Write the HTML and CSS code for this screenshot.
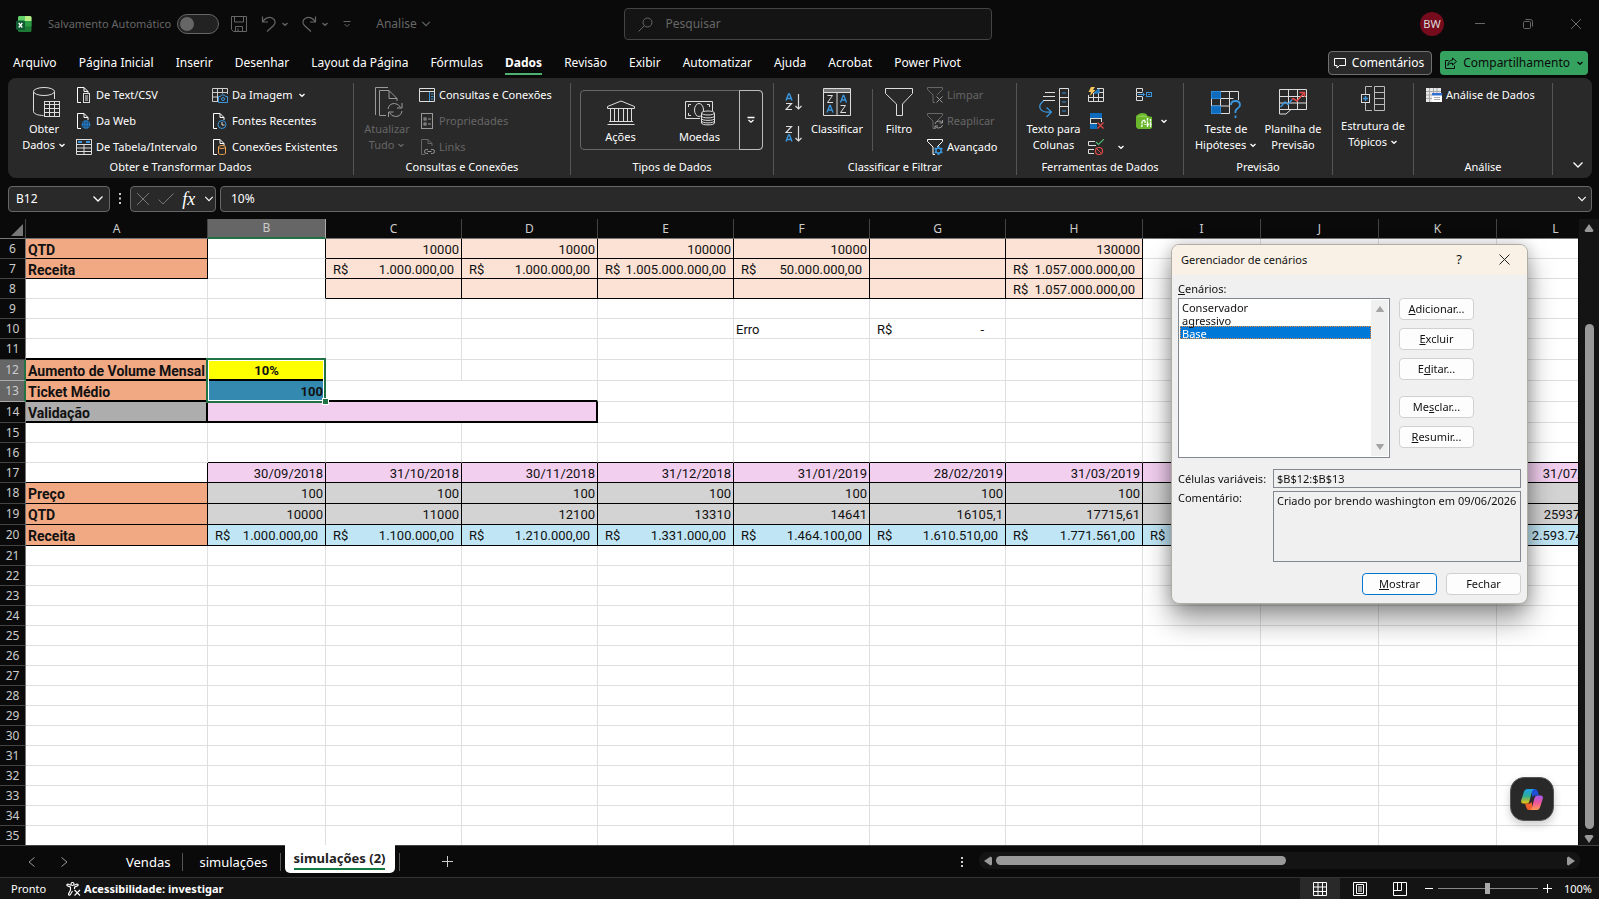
FILE: index.html
```html
<!DOCTYPE html>
<html lang="pt-BR">
<head>
<meta charset="utf-8">
<title>Analise - Excel</title>
<link rel="stylesheet" href="styles.css">
</head>
<body>
<svg class="defs" aria-hidden="true">
  <symbol id="chev" viewBox="0 0 8 8"><path d="M1.5 3 4 5.3 6.500 3" fill="none" stroke="currentColor" stroke-width="1.3"/></symbol>
  <symbol id="chev-l" viewBox="0 0 12 8"><path d="M1.500 1.500 6 6 10.500 1.500" fill="none" stroke="currentColor" stroke-width="1.300"/></symbol>
  <symbol id="doc" viewBox="0 0 16 16"><path d="M5 15.500H1.500V.5H8l4 4V7M8 .5v4h4" fill="none" stroke="currentColor"/></symbol>
  <symbol id="funnel" viewBox="0 0 16 16"><path d="M.5.5h15v2L10 8M.5.5v2L6 8v7.500h2" fill="none" stroke="currentColor"/></symbol>
</svg>
<div class="app">
  <header class="titlebar">
    <svg class="logo" viewBox="0 0 16 16"><rect x="2" width="13.500" height="16" rx="1.500" fill="#1c7a35"/><path d="M3.500 0H9v5H2V1.500Q2 0 3.500 0z" fill="#5fd068"/><path d="M9 0h5q1.500 0 1.500 1.500V5H9z" fill="#b8ee86"/><rect x="9" y="5" width="6.500" height="5.500" fill="#2b9c44"/><rect y="4.500" width="9" height="9.500" rx="1.500" fill="#0e5c31"/><path d="M2.700 7l3.600 4.500M6.300 7l-3.600 4.500" stroke="#fff" stroke-width="1.300"/></svg>
    <label class="autosave">Salvamento Automático <input type="checkbox" class="switch"></label>
    <button class="bare" aria-label="Salvar"><svg width="16" height="16" viewBox="0 0 16 16" fill="none" stroke="currentColor"><path d="M.5.5h15v15H2.500l-2-2zM3.500.5v5.500h9V.5M4.500 15.500v-5h7v5M7 15v-2.500"/></svg></button>
    <button class="bare undo" aria-label="Desfazer"><svg width="16" height="16" viewBox="0 0 16 16" fill="none" stroke="currentColor" stroke-width="1.200"><path d="M1.500.5v5.500H7M1.700 5.700C4 2 8 .2 11.500 2.300s3.200 5.200.8 7.400L6 15.500"/></svg><svg class="chev"><use href="#chev"/></svg></button>
    <button class="bare redo" aria-label="Refazer"><svg width="16" height="16" viewBox="0 0 16 16" fill="none" stroke="currentColor" stroke-width="1.200"><path d="M14.500.5v5.500H9M14.300 5.700C12 2 8 .2 4.500 2.300S1.300 7.500 3.700 9.700L10 15.500"/></svg><svg class="chev"><use href="#chev"/></svg></button>
    <button class="bare more" aria-label="Personalizar"><svg width="8" height="8" viewBox="0 0 8 8" fill="none" stroke="currentColor"><path d="M.5 1.500h7M1.500 4 4 6.500 6.500 4"/></svg></button>
    <button class="bare docname">Analise <svg width="10" height="8"><use href="#chev-l"/></svg></button>
    <label class="search"><svg width="15" height="15" viewBox="0 0 15 15" fill="none" stroke="currentColor"><circle cx="9.500" cy="5.500" r="4.500"/><path d="M6.300 8.700.5 14.500"/></svg><input type="text" placeholder="Pesquisar" aria-label="Pesquisar"></label>
    <div class="window-controls">
      <span class="avatar">BW</span>
      <button class="bare" aria-label="Minimizar"><svg width="10" height="10" viewBox="0 0 10 10" stroke="currentColor"><path d="M0 4.500h10"/></svg></button>
      <button class="bare" aria-label="Restaurar"><svg width="10" height="10" viewBox="0 0 10 10" fill="none" stroke="currentColor"><rect x=".5" y="2.500" width="7" height="7" rx="1"/><path d="M2.500.5h5q2 0 2 2v5"/></svg></button>
      <button class="bare" aria-label="Fechar janela"><svg width="10" height="10" viewBox="0 0 10 10" stroke="currentColor"><path d="M0 0l10 10M10 0 0 10"/></svg></button>
    </div>
  </header>

  <nav class="tabs">
    <a href="#">Arquivo</a><a href="#">Página Inicial</a><a href="#">Inserir</a><a href="#">Desenhar</a><a href="#">Layout da Página</a><a href="#">Fórmulas</a><a href="#" class="active">Dados</a><a href="#">Revisão</a><a href="#">Exibir</a><a href="#">Automatizar</a><a href="#">Ajuda</a><a href="#">Acrobat</a><a href="#">Power Pivot</a>
    <div class="tab-actions">
      <button class="comments"><svg width="12" height="12" viewBox="0 0 12 12" fill="none" stroke="currentColor"><path d="M.5 1.500h11v7H5.500L3 11V8.500H.5z"/></svg>Comentários</button>
      <button class="share"><svg width="12" height="12" viewBox="0 0 12 12" fill="none" stroke="currentColor"><path d="M3.500 3.500h-3v8h9V8.500M7.500 1l4 3.500-4 3.500V6Q4 6 2.800 8.500 3.300 3.500 7.500 3z"/></svg>Compartilhamento<svg class="chev"><use href="#chev"/></svg></button>
    </div>
  </nav>

  <section class="ribbon">
    <div class="group">
      <div class="tools">
        <button class="big obter"><svg width="28" height="31" viewBox="0 0 28 31" fill="none" stroke="#ddd"><ellipse cx="11" cy="4.500" rx="10.500" ry="4"/><path d="M.5 4.500v20c0 2 4 4 10 4M21.500 4.500V12"/><rect x="11.500" y="14.500" width="15" height="15" fill="#292929"/><path d="M11.500 17.500h15M11.500 21.500h15M11.500 25.500h15M16.500 15v15M21.500 15v15"/></svg><span>Obter<br>Dados <svg class="chev"><use href="#chev"/></svg></span></button>
        <div class="list">
          <button><svg viewBox="0 0 16 16" fill="none" stroke="#ddd"><use href="#doc"/><rect x="7.500" y="6.500" width="6" height="9"/><path d="M9 9h3M9 11h3M9 13h3"/></svg>De Text/CSV</button>
          <button><svg viewBox="0 0 16 16" fill="none" stroke="#ddd"><use href="#doc"/><circle cx="10" cy="11.500" r="4.300" fill="#2b88d8" stroke="none"/><path d="M6 10h8M6 13h8M10 7.500v8M8 8q-1 3.500 0 7M12 8q1 3.500 0 7" stroke="#1b3f60" stroke-width=".7"/></svg>Da Web</button>
          <button><svg viewBox="0 0 16 16" fill="none" stroke="#ddd"><path d="M.5 1v14.500h15V1M.5 5.500h15M.5 9h15M.5 12.500h15M8 5.500v10M0 .5h16"/><path d="M2 3h4M10 3h4" stroke="#3a96dd" stroke-width="2"/></svg>De Tabela/Intervalo</button>
        </div>
        <div class="list second">
          <button><svg viewBox="0 0 16 16" fill="none" stroke="#ccc"><path d="M6 14.500H.5V1.500h15V7M.5 5.500h15M.5 10H6M5.500 1.500V14M10.500 1.500v5"/><path d="M6.500 9.500h2l1-1.500h3l1 1.500h2v6h-9z" stroke="#3a96dd" fill="#292929"/><circle cx="11" cy="12" r="1.500" stroke="#3a96dd"/></svg>Da Imagem <svg class="chev"><use href="#chev"/></svg></button>
          <button><svg viewBox="0 0 16 16" fill="none" stroke="#ddd"><use href="#doc"/><circle cx="10" cy="11.500" r="4" stroke="#3a96dd" fill="#292929"/><path d="M10 9v3h2.500"/></svg>Fontes Recentes</button>
          <button><svg viewBox="0 0 16 16" fill="none" stroke="#ddd"><use href="#doc"/><path d="M6.500 8v6.500c0 1.300 7 1.300 7 0V8" stroke="#eea04c"/><ellipse cx="10" cy="8" rx="3.500" ry="1.500" stroke="#eea04c"/></svg>Conexões Existentes</button>
        </div>
      </div>
      <div class="caption">Obter e Transformar Dados</div>
    </div>

    <div class="group">
      <div class="tools">
        <button class="big atualizar" disabled><svg width="28" height="31" viewBox="0 0 28 31" fill="none" stroke="#999"><path d="M.5 28V.5H13M11 28.500H4.500v-25H14l8 8V14M14 3.500v8h8M13 22q1-5.500 6.500-5.500 4 0 6 4M27 16v5h-5M27 24q-1 5.500-6.500 5.500-4 0-6-4M13.500 30v-5h5"/></svg><span>Atualizar<br>Tudo <svg class="chev"><use href="#chev"/></svg></span></button>
        <div class="list">
          <button><svg viewBox="0 0 16 16" fill="none" stroke="#ddd"><path d="M.5 1.500h15v13H.5zM.5 4.500h15"/><path d="M10.500 5v9M12 7h2.500M12 9.500h2.500M12 12h2.500" stroke="#3a96dd"/></svg>Consultas e Conexões</button>
          <button disabled><svg viewBox="0 0 16 16" fill="none" stroke="#999"><rect x="2.500" y=".5" width="11" height="15"/><rect x="5" y="5" width="2" height="2"/><rect x="5" y="10" width="2" height="2"/><path d="M9 6h3M9 11h3"/></svg>Propriedades</button>
          <button disabled><svg viewBox="0 0 16 16" fill="none" stroke="#999"><g transform="translate(1)"><use href="#doc"/><path d="M8 10.500H6.500a2 2 0 0 0 0 4H8M11 10.500h1.500a2 2 0 0 1 0 4H11M7.500 12.500h4"/></g></svg>Links</button>
        </div>
      </div>
      <div class="caption">Consultas e Conexões</div>
    </div>

    <div class="group">
      <div class="tools">
        <div class="gallery">
          <button><svg width="28" height="26" viewBox="0 0 28 26" fill="none" stroke="#ddd"><path d="M.5 8.500v-2L14 1l13.500 5.500v2zM3.500 8.500v13M7.500 8.500v13M11.500 8.500v13M16.500 8.500v13M20.500 8.500v13M24.500 8.500v13M2 21.500h24M.5 24.500h27"/></svg>Ações</button>
          <button><svg width="30" height="26" viewBox="0 0 30 26" fill="none" stroke="#ddd"><path d="M15 18.500H.5V1.500h27V11M3.500 7V4.500H6M3.500 13v2.500H6M22 4.500h2.500V7"/><ellipse cx="14" cy="10" rx="4.500" ry="6.500"/><path d="M16.500 13v10c0 2.500 13 2.500 13 0V13" fill="#292929"/><ellipse cx="23" cy="13" rx="6.500" ry="2" fill="#292929"/><path d="M16.500 16c0 2.500 13 2.500 13 0M16.500 18.500c0 2.500 13 2.500 13 0M16.500 21c0 2.500 13 2.500 13 0"/></svg>Moedas</button>
          <button class="gallery-more" aria-label="Mais"><svg width="8" height="8" viewBox="0 0 8 8" fill="none" stroke="currentColor" stroke-width="1.300"><path d="M.5 1.500h7M1.500 4 4 6.200 6.500 4"/></svg></button>
        </div>
      </div>
      <div class="caption">Tipos de Dados</div>
    </div>

    <div class="group">
      <div class="tools">
        <div class="sorts">
          <button class="bare" aria-label="Classificar de A a Z"><svg width="18" height="18" viewBox="0 0 18 18" fill="none" stroke="#ddd" stroke-width="1.200"><path d="M1 7.500 3.500 1h1L7 7.500M2 5.500h4" stroke="#3a96dd" stroke-width="1.400"/><path d="M1 10.500h5.500L1 16.500H7M13.500 1v15M10.500 13l3 3 3-3"/></svg></button>
          <button class="bare" aria-label="Classificar de Z a A"><svg width="18" height="18" viewBox="0 0 18 18" fill="none" stroke="#ddd" stroke-width="1.200"><path d="M1 16.500 3.500 10h1L7 16.500M2 14.500h4" stroke="#3a96dd" stroke-width="1.400"/><path d="M1 1.500h5.500L1 7.500H7M13.500 1v15M10.500 13l3 3 3-3"/></svg></button>
        </div>
        <button class="big classificar"><svg width="28" height="31" viewBox="0 0 28 31" fill="none" stroke="#ddd"><path d="M.5 1.500h27v27H.5zM.5 5.500h27M14 5.500v23"/><path d="M1 3.500h26" stroke="#777" stroke-width="3"/><path d="M4.500 8.500H9.500L4.500 15.500H10M17.500 18.500h5L17.500 25.500H23"/><path d="M4 25.500l2.700-7h.6l2.700 7M5 23h4M17.500 15.500l2.700-7h.6l2.700 7M18.500 13h4" stroke="#3a96dd" stroke-width="1.300"/></svg><span>Classificar</span></button>
        <i class="rule"></i>
        <button class="big filtro"><svg width="28" height="31" viewBox="0 0 28 31" fill="none" stroke="#ddd"><path d="M.5 1.500h27v5L17.500 17v11.500h-6V17L.5 6.500z"/></svg><span>Filtro</span></button>
        <div class="list filters">
          <button disabled><svg viewBox="0 0 16 16" fill="none" stroke="#999"><use href="#funnel"/><path d="M9.500 9.500l6 6M15.500 9.500l-6 6"/></svg>Limpar</button>
          <button disabled><svg viewBox="0 0 16 16" fill="none" stroke="#999"><use href="#funnel"/><path d="M8 11q.5-3 4-3 2 0 3 1.500M15.500 7v3h-3M15.500 12q-.5 3-4 3-2 0-3-1.500M8 16v-3h3"/></svg>Reaplicar</button>
          <button><svg viewBox="0 0 16 16" fill="none" stroke="#ddd"><use href="#funnel"/><circle cx="11.500" cy="11.500" r="2.600" stroke="#3a96dd" stroke-width="1.500"/><path d="M11.500 7v2M11.500 14v2M7.600 9.200l1.700 1M13.700 12.800l1.700 1M7.600 13.800l1.700-1M13.700 10.200l1.700-1" stroke="#3a96dd" stroke-width="1.800"/></svg>Avançado</button>
        </div>
      </div>
      <div class="caption">Classificar e Filtrar</div>
    </div>

    <div class="group">
      <div class="tools">
        <button class="big texto"><svg width="30" height="31" viewBox="0 0 30 31" fill="none" stroke="#ddd"><path d="M6 5.500h10M4 9.500h12M4 13.500h12M20.500 1.500h9v27h-9zM20.500 10.500h9M20.500 19.500h9"/><path d="M23 6h4M23 15h4M23 24h4" stroke="#3a96dd"/><path d="M4.500 14Q-1 18 1.500 22t10.500 3M7.500 20.500l5 4.500-5 5" stroke="#3a96dd" stroke-width="1.200"/></svg><span>Texto para<br>Colunas</span></button>
        <div class="list icons">
          <button aria-label="Preenchimento Relâmpago"><svg viewBox="0 0 16 16" fill="none" stroke="#ddd"><path d="M.5 8v6.500h15V1.500H9M0 10.500h16M5.500 6v8.500M10.500 2v12.500M6 5.500h9.500"/><path d="M6 6h5V2z" fill="#0f6cbd" stroke="#3a96dd"/><path d="M3 0h4L5 3h2.500L2 9l1-4H.5z" fill="#f7c65a" stroke="none"/></svg></button>
          <button aria-label="Remover Duplicadas"><svg viewBox="0 0 16 16"><path d="M2 0h12v5H2zM2 11h7v5H2z" fill="#0f6cbd"/><path d="M2.500 5v6M13.500 5v4M2 5.500h12M2 10.500h7" fill="none" stroke="#ddd"/><path d="M9.500 9.500l6 6M15.500 9.500l-6 6" stroke="#e04848" stroke-width="1.300"/></svg></button>
          <button aria-label="Validação de Dados"><svg viewBox="0 0 16 16" fill="none" stroke="#ddd"><path d="M7 2.500H.5v4H8M6 10.500H.5v4H6"/><path d="M8 3l2.500 2.500L16 0" stroke="#4cb86c" stroke-width="1.200"/><circle cx="11" cy="12" r="3.500" stroke="#e04848" stroke-width="1.200"/><path d="M8.500 9.500l5 5" stroke="#e04848"/></svg><svg class="chev"><use href="#chev"/></svg></button>
        </div>
        <div class="list icons">
          <button aria-label="Consolidar"><svg viewBox="0 0 16 16" fill="none" stroke="#ddd"><path d="M6.500 4.500V1.500h-6v4h6M.5 6v3M6.500 10v3.500h-6v-4h6"/><rect x="10.500" y="5.500" width="5" height="4" stroke="#3a96dd"/><path d="M2 7.500h6.500M6.500 5.500l2 2-2 2M12 7.500h2" stroke="#3a96dd"/></svg></button>
          <button aria-label="Modelo de Dados"><svg viewBox="0 0 16 16"><path d="M0 3.500Q1 1 6 0q5 0 5.500 3L16 4v11l-2 1H2l-2-2z" fill="#6bb72c"/><path d="M1 3.800h10V3Q6 1.500 1 3.800z" fill="#9ad45c"/><path d="M5 13.500l1-.500V8l3-1v5M11.500 5v9M14.500 6v8M10.500 11.500h5" stroke="#fff" stroke-width="1.300" stroke-dasharray="2.500 .8" fill="none"/></svg><svg class="chev"><use href="#chev"/></svg></button>
          <span></span>
        </div>
      </div>
      <div class="caption">Ferramentas de Dados</div>
    </div>

    <div class="group">
      <div class="tools">
        <button class="big teste"><svg width="30" height="31" viewBox="0 0 30 31" fill="none" stroke="#ddd"><path d="M.5 4.500h27V13M.5 26.500h18M.5 11.500h22M.5 19h18M9.500 4.500v22M18.500 4.500v22M.5 4.500v22"/><path d="M.5 4.500h9v7h-9zM.5 19h9v7.500h-9z" fill="#0f6cbd" stroke="#2b88d8"/><path d="M20 18q0-4 4.500-4t4.500 4q0 2-2.500 3.500T24.500 26M24.500 28.500v2.500" stroke="#3a96dd" stroke-width="1.800"/></svg><span>Teste de<br>Hipóteses <svg class="chev"><use href="#chev"/></svg></span></button>
        <button class="big planilha"><svg width="28" height="31" viewBox="0 0 28 31" fill="none" stroke="#ddd"><path d="M.5 2.500h27v20H12l-5 4.500H.5zM.5 9.500h27M.5 16h27M9.500 2.500v20M18.500 2.500v20M1 22.500h11"/><path d="M1.500 20 6 15l3 2.500 4-5" stroke="#3a96dd" stroke-width="1.500"/><path d="M13 12.500l1-1 4 2.500 7-8M20.500 5.500H25.500V10" stroke="#e04848" stroke-width="1.500"/></svg><span>Planilha de<br>Previsão</span></button>
      </div>
      <div class="caption">Previsão</div>
    </div>

    <div class="group">
      <div class="tools">
        <button class="big estrutura"><svg width="24" height="26" viewBox="0 0 24 26" fill="none" stroke="#ddd"><path d="M13.500.5h10v24h-10zM13.500 6.500h10M13.500 12.500h10M13.500 18.500h10M11 .5H4.500v8M4.500 17v7.500H11" stroke="#bbb"/><rect x=".5" y="8.500" width="8" height="8"/><path d="M2 12.500h5M4.500 10v5" stroke="#3a96dd" stroke-width="1.500"/></svg><span>Estrutura de<br>Tópicos <svg class="chev"><use href="#chev"/></svg></span></button>
      </div>
    </div>

    <div class="group">
      <div class="tools">
        <div class="list analise">
          <button><svg viewBox="0 0 16 16"><path d="M0 1h15v14H0z" fill="#e8e8e8"/><path d="M0 4.500h15M0 8h6M0 11.500h6M3.500 1v14M7.500 1v5M11 1v5" stroke="#a8a8a8"/><path d="M6 6h10v9H6z" fill="#fff"/><path d="M6 6h10v2.500H6z" fill="#2f6fd0"/><path d="M8 10.500h6M8 12.500h6" stroke="#aaa"/></svg>Análise de Dados</button>
        </div>
      </div>
      <div class="caption">Análise</div>
    </div>
    <button class="bare collapse" aria-label="Recolher faixa"><svg width="12" height="8"><use href="#chev-l"/></svg></button>
  </section>

  <section class="formula-row">
    <label class="namebox"><input type="text" value="B12" aria-label="Caixa de nome"><svg width="12" height="8"><use href="#chev-l"/></svg></label>
    <svg class="dots" width="4" height="12" viewBox="0 0 4 12" fill="#ccc"><path d="M1 0h2v2H1zM1 4.500h2v2H1zM1 9h2v2H1z"/></svg>
    <div class="fx">
      <button class="bare" aria-label="Cancelar"><svg width="12" height="12" viewBox="0 0 12 12" stroke="#777"><path d="M0 0l12 12M12 0 0 12"/></svg></button>
      <button class="bare" aria-label="Inserir"><svg width="16" height="12" viewBox="0 0 16 12" fill="none" stroke="#777"><path d="M.5 6.500 5 11 15.500.5"/></svg></button>
      <button class="bare fn"><i>fx</i></button>
      <svg width="10" height="8"><use href="#chev-l"/></svg>
    </div>
    <label class="formula"><input type="text" value="10%" aria-label="Barra de fórmulas"><svg width="10" height="8"><use href="#chev-l"/></svg></label>
  </section>

  <main class="workarea">
    <div class="sheet"><table id="grid"></table></div>
    <div class="vscroll">
      <svg width="10" height="8" viewBox="0 0 10 8" fill="#999"><path d="M5 0l4.500 6.500Q9 8 8 8H2Q1 8 .5 6.500z"/></svg>
      <i></i>
      <svg width="10" height="8" viewBox="0 0 10 8" fill="#999"><path d="M5 8 .5 1.500Q1 0 2 0h6q1 0 1.500 1.500z"/></svg>
    </div>
  </main>

  <nav class="sheetbar">
    <div class="arrows">
      <button class="bare" aria-label="Anterior"><svg width="7" height="10" viewBox="0 0 7 10" fill="none" stroke="#999"><path d="M6.500.5 1 5l5.500 4.500"/></svg></button>
      <button class="bare" aria-label="Próxima"><svg width="7" height="10" viewBox="0 0 7 10" fill="none" stroke="#999"><path d="M.5.5 6 5 .5 9.500"/></svg></button>
    </div>
    <a href="#" class="sheettab">Vendas</a>
    <a href="#" class="sheettab">simulações</a>
    <a href="#" class="current"><span>simulações (2)</span></a>
    <i class="tick"></i>
    <button class="bare plus" aria-label="Nova planilha"><svg width="12" height="12" viewBox="0 0 12 12" stroke="#ccc"><path d="M0 5.500h11M5.500 0v11"/></svg></button>
    <svg class="grip" width="2" height="12" viewBox="0 0 2 12" fill="#ccc"><path d="M0 1h2v2H0zM0 5h2v2H0zM0 9h2v2H0z"/></svg>
    <div class="hscroll">
      <svg width="8" height="10" viewBox="0 0 8 10" fill="#999"><path d="M0 5l6.500-4.500Q8 1 8 2v6Q8 9 6.500 9.500z"/></svg>
      <i></i>
      <svg width="8" height="10" viewBox="0 0 8 10" fill="#999"><path d="M8 5 1.500.5Q0 1 0 2v6q0 1 1.500 1.500z"/></svg>
    </div>
  </nav>

  <footer class="status">
    <span>Pronto</span>
    <button class="bare access"><svg width="15" height="14" viewBox="0 0 15 14" fill="none" stroke="#fff" stroke-width="1.100"><circle cx="6.500" cy="2" r="1.500"/><path d="M5 3.200 2 2Q.5 2 1 3.500l3.500 1.700V8L2.500 12q0 1.500 1.500 1L6.500 9M8 3.200 11 2q1.500 0 1 1.500L8.500 5.200V7M8.500 8l5.500 5.500M14 8l-5.500 5.500"/></svg>Acessibilidade: investigar</button>
    <div class="views">
      <button class="bare on" aria-label="Normal"><svg width="14" height="14" viewBox="0 0 14 14" fill="none" stroke="#fff"><path d="M.5.5h13v13H.5zM.5 5h13M.5 9.500h13M5 .5v13M9.500.5v13"/></svg></button>
      <button class="bare" aria-label="Layout da Página"><svg width="14" height="14" viewBox="0 0 14 14" fill="none" stroke="#fff"><path d="M.5.5h13v13H.5zM3.500 2.500h7v9h-7zM5 5h4M5 7h4M5 9h4"/></svg></button>
      <button class="bare" aria-label="Quebra de página"><svg width="14" height="14" viewBox="0 0 14 14" fill="none" stroke="#fff"><path d="M.5.5h13v13H.5zM.5 8.500h8v-8M4.500.5v8"/></svg></button>
    </div>
    <button class="bare" aria-label="Menos zoom"><svg width="8" height="9" viewBox="0 0 8 9" stroke="#fff"><path d="M0 4.500h8"/></svg></button>
    <input type="range" class="zoom" min="0" max="100" value="50" aria-label="Zoom">
    <button class="bare" aria-label="Mais zoom"><svg width="9" height="9" viewBox="0 0 9 9" stroke="#fff"><path d="M0 4.500h9M4.500 0v9"/></svg></button>
    <span class="pct">100%</span>
  </footer>
</div>

<button class="copilot" aria-label="Copilot"><svg width="22" height="21" viewBox="0 0 22 21"><defs><linearGradient id="ca" x1="0" y1="0" x2="0" y2="1"><stop offset="0" stop-color="#1ea0ea"/><stop offset=".5" stop-color="#2fae94"/><stop offset="1" stop-color="#f3c40a"/></linearGradient><linearGradient id="cb" x1="0" y1="0" x2="0" y2="1"><stop offset="0" stop-color="#a35bf0"/><stop offset=".5" stop-color="#f0559a"/><stop offset="1" stop-color="#fb9a50"/></linearGradient></defs><path d="M10 0h4q2 0 2.700 2.500L18 6.500h-4q-2 0-2.500 2z" fill="#1f4fd8"/><path d="M12 21H8q-2 0-2.700-2.500L4 14.500h4q2 0 2.500-2z" fill="#f4602c"/><path d="M6 0h7q-1.500.5-2 2.500L8.500 12Q8 14.500 5.500 14.500H2Q-.5 14.500.3 11L3 2.500Q4 0 6 0z" fill="url(#ca)"/><path d="M16 21H9q1.500-.5 2-2.500L13.500 9q.5-2.500 3-2.500H20q2.500 0 1.700 3.500L19 18.500Q18 21 16 21z" fill="url(#cb)"/></svg></button>

<section class="dialog" role="dialog" aria-labelledby="dlg-title">
  <header><h1 id="dlg-title">Gerenciador de cenários</h1><button class="bare help" aria-label="Ajuda">?</button><button class="bare" aria-label="Fechar"><svg width="11" height="11" viewBox="0 0 11 11" stroke="#222"><path d="M.5.5l10 10M10.500.5l-10 10"/></svg></button></header>
  <div class="dialog-body">
    <label for="scen"><u>C</u>enários:</label>
    <div class="scen-row">
      <div class="listbox">
        <select id="scen" size="12"><option>Conservador</option><option>agressivo</option><option selected>Base</option></select>
        <div class="lscroll"><svg width="8" height="6" viewBox="0 0 8 6" fill="#a3a3a3"><path d="M4 0l4 5.500-.5.5h-7L0 5.500z"/></svg><svg width="8" height="6" viewBox="0 0 8 6" fill="#a3a3a3"><path d="M4 6 0 .5.500 0h7l.5.500z"/></svg></div>
      </div>
      <div class="actions">
        <button><u>A</u>dicionar...</button><button><u>E</u>xcluir</button><button>E<u>d</u>itar...</button>
        <button class="apart">Me<u>s</u>clar...</button><button><u>R</u>esumir...</button>
      </div>
    </div>
    <div class="fields">
      <label for="cells">Células variáveis:</label><input id="cells" type="text" value="$B$12:$B$13" readonly>
      <label for="note">Comentário:</label><textarea id="note" readonly>Criado por brendo washington em 09/06/2026</textarea>
    </div>
    <div class="dlg-foot"><button class="primary"><u>M</u>ostrar</button><button>Fechar</button></div>
  </div>
</section>
<script src="script.js"></script>
</body>
</html>
```
FILE: styles.css
```css
* { box-sizing: border-box; }
body { margin: 0; background: #0a0a0a; color: #fff; font: 12px/16px "Noto Sans", "Open Sans", sans-serif; overflow: hidden; }
button, input, select, textarea { font: inherit; color: inherit; margin: 0; }
button { background: none; border: 0; padding: 0; display: flex; align-items: center; white-space: nowrap; }
a { color: inherit; text-decoration: none; }
i { flex: none; }
svg { flex: none; }
.defs { position: absolute; width: 0; height: 0; }
.chev { width: 8px; height: 8px; }
.app { height: 100vh; display: flex; flex-direction: column; }

.titlebar { position: relative; flex: none; height: 48px; display: flex; align-items: center; padding: 0 18px 0 16px; color: #666; }
.logo { width: 16px; height: 16px; margin-right: 16px; }
.autosave { display: flex; align-items: center; gap: 6px; font-size: 11px; }
.switch { appearance: none; width: 42px; height: 20px; border: 1px solid #666; border-radius: 10px; background: #222; padding: 2px; }
.switch::before { content: ""; display: block; width: 14px; height: 14px; border-radius: 50%; background: #666; }
.titlebar > .bare { margin-left: 12px; }
.titlebar > .undo { margin-left: 14px; gap: 4px; }
.titlebar > .redo { gap: 4px; }
.titlebar > .more { margin-left: 14px; }
.titlebar > .docname { margin-left: 25px; gap: 4px; }
.search { position: absolute; left: 50%; top: 8px; width: 368px; height: 32px; margin-left: -176px; display: flex; align-items: center; gap: 13px; padding: 0 13px; border: 1px solid #444; border-radius: 4px; background: #141414; }
.search input { flex: 1; min-width: 0; border: 0; background: none; outline: 0; padding: 0; font-size: 12px; }
.search input::placeholder { color: #666; }
.window-controls { margin-left: auto; display: flex; align-items: center; gap: 38px; padding-right: 0; }
.avatar { width: 24px; height: 24px; margin-right: -7px; border-radius: 50%; background: #750b1c; color: #ddd; font-size: 11px; line-height: 24px; text-align: center; }

.tabs { flex: none; height: 30px; display: flex; align-items: center; gap: 22px; padding: 0 11px 0 13px; font-size: 12px; white-space: nowrap; }
.tabs a { line-height: 20px; border-bottom: 2px solid transparent; margin-top: 2px; }
.tabs .active { font-weight: 700; border-color: #4cb272; }
.tab-actions { margin-left: auto; display: flex; gap: 8px; }
.tab-actions button { height: 24px; border-radius: 4px; padding: 0 7px 0 5px; gap: 6px; }
.comments { border: 1px solid #707070; background: #292929; }
.share { background: #35a35f; color: #0a0a0a; }
.tab-actions .share { padding: 0 4px 0 5px; }

.ribbon { flex: none; height: 100px; margin: 0 7px 0 8px; border-radius: 8px; background: #292929; display: grid; grid-template-columns: 346px 217px 203px 243px 167px 149px 81px 139px 1fr; padding: 5px 0 6px; font-size: 11px; }
.group { display: flex; flex-direction: column; border-right: 1px solid #555; min-width: 0; }
.tools { flex: 1; display: flex; align-items: flex-start; }
.caption { height: 14px; margin-bottom: 1px; line-height: 14px; font-size: 11px; text-align: center; }
.big { flex-direction: column; gap: 3px; padding-top: 4px; line-height: 16px; }
.big span { text-align: center; }
.big .chev { display: inline-block; }
.list { display: grid; grid-auto-rows: 26px; margin-top: -1px; }
.list button { gap: 4px; }
.list button > svg:first-child { width: 16px; height: 16px; }
.list button > .chev { margin-left: 1px; }
button:disabled { color: #666; }
.obter { width: 60px; margin-left: 6px; }
.obter svg:first-child { margin-left: 5px; }
.obter + .list { width: 136px; margin-left: 2px; }
.atualizar { width: 60px; margin: 0 2px 0 3px; }
.atualizar svg:first-child { margin-left: 4px; }
.gallery { display: flex; width: 183px; height: 60px; margin: 7px 0 0 9px; border: 1px solid #666; border-radius: 4px; }
.gallery button { flex-direction: column; width: 79px; padding-top: 9px; gap: 3px; }
.gallery .gallery-more { width: 24px; margin: -1px -1px -1px 0; padding: 0; justify-content: center; border: 1px solid #bbb; border-radius: 0 4px 4px 0; }
.sorts { display: grid; gap: 14px; margin: 10px 0 0 11px; }
.classificar { width: 60px; margin: 0 4px; }
.rule { width: 1px; height: 62px; margin: 6px 0 0 1px; background: #555; }
.filtro { width: 52px; }
.filters { margin-left: 2px; }
.texto { width: 60px; margin: 0 6px 0 8px; }
.list.icons { width: 50px; }
.list.icons button { gap: 12px; }
.list.icons + .icons button { gap: 7px; }
.teste { width: 66px; margin-left: 9px; }
.planilha { width: 68px; }
.estrutura { width: 80px; gap: 6px; padding-top: 3px; }
.analise { margin-left: 12px; }
.collapse { align-self: end; justify-self: center; padding-bottom: 6px; margin-left: 10px; }

.formula-row { flex: none; height: 41px; padding: 8px 7px 7px 8px; display: flex; align-items: stretch; font-size: 12px; }
.namebox, .fx, .formula { display: flex; align-items: center; border: 1px solid #666; border-radius: 4px; background: #292929; }
.namebox { width: 102px; padding: 0 5px 0 7px; }
.formula-row input { flex: 1; min-width: 0; padding: 0; border: 0; background: none; outline: 0; }
.dots { margin: 7px 8px 0; }
.fx { width: 86px; padding: 0 1px 0 6px; justify-content: space-between; margin-right: 4px; }
.fn { font: italic 18px/18px "Liberation Serif", serif; }
.formula { flex: 1; padding: 0 4px 0 10px; }

.workarea { flex: 1; min-height: 0; display: flex; }
.sheet { flex: 1; min-width: 0; overflow: hidden; }
table { width: 1614px; table-layout: fixed; border-collapse: separate; border-spacing: 0; background: #fff; color: #111; font: 13px/16px Roboto, "Noto Sans", sans-serif; }
th, td { padding: 0; height: 20px; font-weight: 400; white-space: nowrap; }
tr.tall > * { height: 21px; }
th { background: #0a0a0a; color: #ccc; font-family: "Noto Sans", sans-serif; font-size: 12px; border: 0 solid #444; border-right-width: 1px; border-bottom: 1px solid #777; }
tbody th { border-right-color: #777; border-bottom-color: #444; }
thead th.sel { background: #666; border-bottom: 2px solid #217346; border-right-color: #aaa; }
tbody th.sel { background: #666; border-bottom-color: #aaa; border-right: 2px solid #217346; }
.corner svg { display: block; margin: 3px 2px 0 auto; }
td { position: relative; border-right: 1px solid #dfdfdf; border-bottom: 1px solid #dfdfdf; padding: 2px 2px 0; }
.num { text-align: right; }
.mid { text-align: center; }
.bold { font-weight: 700; font-size: 14px; }
td.mid, td.blue { font-size: 13px; }
.money { display: flex; justify-content: space-between; padding: 0 5px; }
.zero span:last-child { margin-right: 14px; }
.peach { background: #fbe2d5; }
.orange { background: #f1a983; }
.gray { background: #d3d3d3; }
.dark { background: #adadad; }
.pink { background: #f2ceef; }
.sky { background: #c0e6f5; }
.yellow { background: #ff0; }
.blue { background: #3489b1; }
.br { border-right-color: #000; }
.bb { border-bottom-color: #000; }
.b2 { border-bottom: 2px solid #000; }
.r2 { border-right: 2px solid #000; }
.nr { border-right-width: 0; }
.selection { position: absolute; z-index: 1; left: -2px; top: -2px; width: 120px; height: 45px; border: 2px solid #217346; box-shadow: inset 0 0 0 1px #fff; }
.selection::after { content: ""; position: absolute; right: -4px; bottom: -3px; width: 5px; height: 5px; background: #217346; box-shadow: 0 0 0 1px #fff; }
.vscroll { flex: none; width: 20px; margin-left: 1px; display: flex; flex-direction: column; align-items: center; padding: 5px 0 2px; background: #141414; }
.vscroll i { width: 9px; flex: 506; margin: 92px 0 6px; border-radius: 5px; background: #999; }

.sheetbar { flex: none; height: 32px; display: flex; align-items: stretch; border-top: 1px solid #444; font-size: 13px; }
.arrows { display: flex; gap: 26px; width: 110px; padding-left: 28px; }
.sheettab { display: flex; align-items: center; padding: 0 13px 0 16px; position: relative; }
.sheettab::after { content: ""; position: absolute; right: 0; top: 7px; width: 1px; height: 18px; background: #555; }
.current { width: 110px; height: 28px; margin: -1px 4px 0 4px; border-radius: 0 0 5px 5px; background: #fff; color: #222; font-weight: 700; font-size: 13px; display: flex; justify-content: center; align-items: flex-start; padding-top: 3px; }
.current span { line-height: 20px; border-bottom: 2px solid #107c41; }
.tick { width: 1px; height: 18px; margin-top: 7px; background: #555; }
.plus { margin-left: 42px; }
.grip { margin: 10px 16px 0 auto; }
.hscroll { width: calc(38% - 7px); height: 17px; margin: 6px 19px 0 0; padding: 0 5px; display: flex; align-items: center; border-radius: 8px; background: #141414; }
.hscroll i { width: 49%; height: 9px; margin: 0 auto 0 4px; border-radius: 5px; background: #999; }
.status { flex: none; height: 22px; display: flex; align-items: center; background: #141414; border-top: 1px solid #333; padding: 0 7px 0 11px; font-size: 11px; }
.access { margin-left: 20px; gap: 3px; font-weight: 700; }
.views { margin: 0 5px 0 auto; display: flex; align-self: stretch; }
.views button { width: 40px; justify-content: center; }
.views .on { background: #292929; }
.zoom { appearance: none; width: 100px; height: 12px; margin: 0 5px; background: linear-gradient(#888, #888) center / 100% 1px no-repeat; }
.zoom::-webkit-slider-thumb { appearance: none; width: 5px; height: 11px; background: #aaa; }
.pct { margin-left: 12px; }

.copilot { position: fixed; right: 45px; bottom: 78px; width: 44px; height: 44px; justify-content: center; border-radius: 14px; background: #292929; border: 1px solid #555; box-shadow: 0 4px 8px #0003; }

.dialog { position: fixed; right: 71px; top: 244px; width: 357px; border: 1px solid #b0aca6; border-radius: 8px; background: #f0f0f0; color: #111; overflow: hidden; box-shadow: 0 16px 28px #0006, 0 0 16px #0003; font-size: 11px; line-height: 13px; }
.dialog header { height: 30px; display: flex; align-items: center; padding: 0 17px 2px 9px; background: #f9f1e6; }
.dialog h1 { flex: 1; margin: 0; font-size: 11px; font-weight: 400; }
.help { margin-right: 37px; font-size: 13px; }
.dialog-body { padding: 7px 6px 8px 6px; }
.scen-row { display: flex; gap: 9px; margin-top: 3px; }
.listbox { width: 212px; height: 160px; border: 1px solid #828790; background: #fff; display: flex; padding: 1px; }
select { flex: 1; min-width: 0; border: 0; padding: 0; background: none; outline: 0; overflow: hidden; border-radius: 0; }
option { height: 13px; min-height: 13px; padding: 0 2px; line-height: 12px; }
option:checked { background: linear-gradient(#0078d7, #0078d7); color: #fff; outline: 1px dotted #e98b3a; outline-offset: -1px; }
.lscroll { width: 17px; background: #f0f0f0; display: flex; flex-direction: column; justify-content: space-between; align-items: center; padding: 6px 0; }
.actions { display: flex; flex-direction: column; gap: 8px; }
.actions button, .dlg-foot button { width: 75px; height: 22px; justify-content: center; border: 1px solid #d0d0d0; border-radius: 4px; background: #fdfdfd; padding-bottom: 2px; }
.actions .apart { margin-top: 8px; }
.fields { display: grid; grid-template-columns: 95px 1fr; gap: 3px 0; margin-top: 11px; }
.fields label { padding-top: 3px; }
.fields label + textarea { line-height: 14px; }
.fields label[for="note"] { padding-top: 0; }
.fields input, .fields textarea { width: 100%; border: 1px solid #828790; border-radius: 0; background: #f0f0f0; padding: 2px 3px; outline: 0; display: block; resize: none; white-space: nowrap; overflow: hidden; }
.fields input { height: 19px; }
.fields textarea { height: 71px; }
.dlg-foot { display: flex; justify-content: flex-end; gap: 9px; margin-top: 11px; padding-right: 0; }
.dlg-foot .primary { border-color: #0078d4; }
```
FILE: script.js
```js
const columns = [['', 26], ['A', 182], ['B', 118], ['C', 136], ['D', 136], ['E', 136], ['F', 136], ['G', 136], ['H', 137], ['I', 118], ['J', 118], ['K', 118], ['L', 118]];
const letters = columns.slice(1).map(c => c[0]);
const tallRows = [11, 12, 13, 14, 18, 19, 20];
const cells = {};

function put(row, cols, values, cls) {
  [...cols].forEach((c, i) => {
    cells[c + row] = { text: Array.isArray(values) ? values[i] || '' : values, cls };
  });
}
function restyle(ref, cls) {
  cells[ref] = cells[ref] || { text: '', cls: '' };
  cells[ref].cls += ' ' + cls;
}

put(6, 'A', 'QTD', 'orange bold br bb');
put(7, 'A', 'Receita', 'orange bold br bb');
put(6, 'CDEFGH', ['10000', '10000', '100000', '10000', '', '130000'], 'peach num br bb');
put(7, 'CDEFGH', ['R$ 1.000.000,00', 'R$ 1.000.000,00', 'R$ 1.005.000.000,00', 'R$ 50.000.000,00', '', 'R$ 1.057.000.000,00'], 'peach br bb');
put(8, 'CDEFGH', ['', '', '', '', '', 'R$ 1.057.000.000,00'], 'peach br bb');
['B6', 'B7', 'B8'].forEach(r => restyle(r, 'br'));
put(10, 'F', 'Erro', '');
put(10, 'G', 'R$ -', 'zero');
restyle('A11', 'b2');
put(12, 'A', 'Aumento de Volume Mensal', 'orange bold b2 br');
put(12, 'B', '10%', 'yellow bold mid b2');
put(13, 'A', 'Ticket Médio', 'orange bold b2 br');
put(13, 'B', '100', 'blue bold num b2');
restyle('C13', 'b2 nr');
restyle('D13', 'b2');
put(14, 'A', 'Validação', 'dark bold b2 r2');
put(14, 'B', '', 'pink b2 nr');
put(14, 'C', '', 'pink b2 nr');
put(14, 'D', '', 'pink b2 r2');
[...'BCDEFGHIJKL'].forEach(c => restyle(c + 16, 'bb'));
restyle('A17', 'br bb');
put(17, 'BCDEFGHIJKL', ['30/09/2018', '31/10/2018', '30/11/2018', '31/12/2018', '31/01/2019', '28/02/2019', '31/03/2019', '', '', '', '31/07/2019'], 'pink num br bb');
put(18, 'A', 'Preço', 'orange bold br bb');
put(18, 'BCDEFGHIJKL', ['100', '100', '100', '100', '100', '100', '100'], 'gray num br bb');
put(19, 'A', 'QTD', 'orange bold br bb');
put(19, 'BCDEFGHIJKL', ['10000', '11000', '12100', '13310', '14641', '16105,1', '17715,61', '', '', '', '25937,4246'], 'gray num br bb');
put(20, 'A', 'Receita', 'orange bold br bb');
put(20, 'BCDEFGHIJKL', ['R$ 1.000.000,00', 'R$ 1.100.000,00', 'R$ 1.210.000,00', 'R$ 1.331.000,00', 'R$ 1.464.100,00', 'R$ 1.610.510,00', 'R$ 1.771.561,00', 'R$ ', '', '', 'R$ 2.593.742,46'], 'sky br bb');

function render(text, cls) {
  if (!text.startsWith('R$')) return text;
  const [sign, amount] = text.split(' ');
  return `<div class="money ${cls}"><span>${sign}</span><span>${amount}</span></div>`;
}

let html = '<colgroup>' + columns.map(c => `<col style="width:${c[1]}px">`).join('') + '</colgroup><thead><tr>';
html += '<th class="corner"><svg width="12" height="12" viewBox="0 0 12 12"><path d="M12 0v12H0z" fill="#777"/></svg></th>';
html += letters.map(l => `<th class="${l === 'B' ? 'sel' : ''}">${l}</th>`).join('') + '</tr></thead><tbody>';
for (let r = 6; r <= 35; r++) {
  html += `<tr class="${tallRows.includes(r) ? 'tall' : ''}"><th class="${r === 12 || r === 13 ? 'sel' : ''}">${r}</th>`;
  for (const l of letters) {
    const cell = cells[l + r] || { text: '', cls: '' };
    html += `<td class="${cell.cls}">${render(cell.text, cell.cls.trim() === 'zero' ? 'zero' : '')}${l + r === 'B12' ? '<i class="selection"></i>' : ''}</td>`;
  }
  html += '</tr>';
}
document.getElementById('grid').innerHTML = html + '</tbody>';
```
